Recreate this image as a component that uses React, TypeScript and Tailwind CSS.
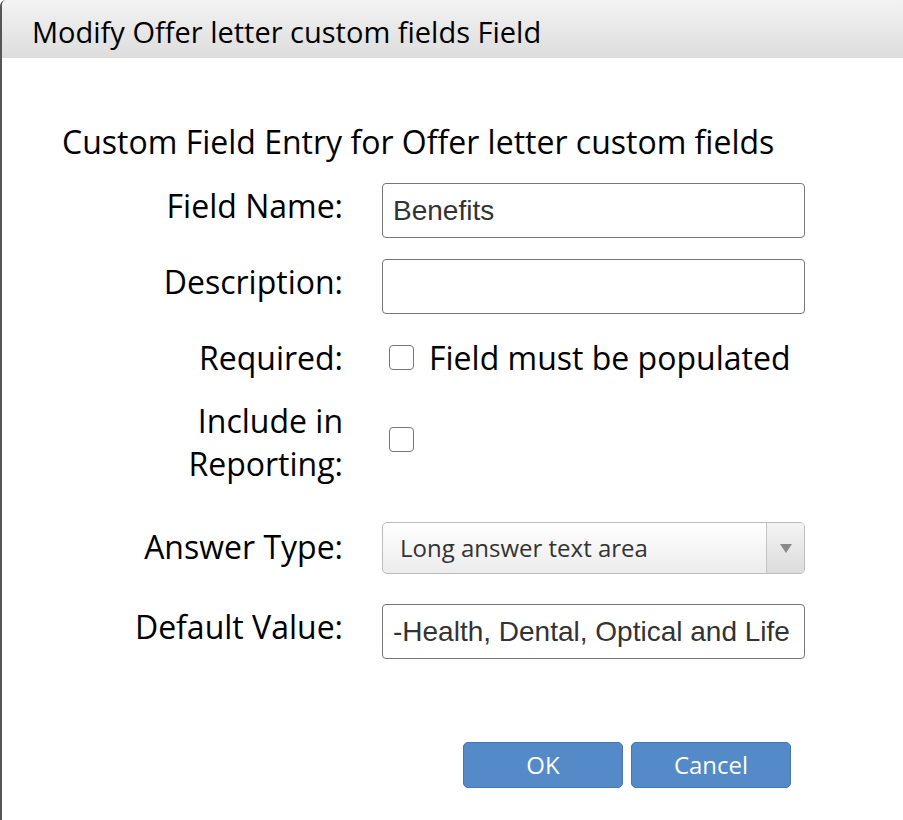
import React from "react";

const sans = "font-['Open_Sans',sans-serif]";
const arial = "font-['Liberation_Sans',Arial,sans-serif]";

function Label({ children, className = "" }: { children: React.ReactNode; className?: string }) {
  return (
    <div className={`w-[341px] shrink-0 text-right text-[32px] leading-[43px] text-black ${sans} ${className}`}>
      {children}
    </div>
  );
}

function TextInput({ value }: { value: string }) {
  return (
    <input
      readOnly
      value={value}
      className={`h-[55px] w-[423px] rounded-[4px] border-[1.5px] border-[#777] bg-white px-[10px] text-[28px] text-[#333] outline-none ${arial}`}
    />
  );
}

function Checkbox() {
  return (
    <span className="inline-block h-[25px] w-[25px] shrink-0 rounded-[4px] border-[1.5px] border-[#777] bg-white" />
  );
}

export default function App() {
  return (
    <div className="min-h-[820px] w-[903px] overflow-hidden bg-white">
      <div className="min-h-[820px] rounded-tl-[6px] border-l-2 border-[#555]">
        <div
          className={`flex h-[58px] items-center rounded-tl-[5px] bg-gradient-to-b from-[#f3f3f3] to-[#dddddd] pl-[30px] pt-[6px] text-[29px] text-black ${sans}`}
        >
          Modify Offer letter custom fields Field
        </div>

        <div className="flex flex-col pt-[66px]">
          <div className={`pl-[60px] text-[32px] leading-[36px] text-black ${sans}`}>
            Custom Field Entry for Offer letter custom fields
          </div>

          <div className="mt-[23px] flex items-center gap-[39px]">
            <Label className="pb-[10px]">Field Name:</Label>
            <TextInput value="Benefits" />
          </div>

          <div className="mt-[21px] flex items-center gap-[39px]">
            <Label className="pb-[10px]">Description:</Label>
            <TextInput value="" />
          </div>

          <div className="mt-[22px] flex items-center gap-[39px]">
            <Label>Required:</Label>
            <div className="flex items-center gap-[15px] pl-[7px]">
              <Checkbox />
              <span className={`text-[32px] leading-[43px] text-black ${sans}`}>
                Field must be populated
              </span>
            </div>
          </div>

          <div className="mt-[20px] flex items-center gap-[39px]">
            <Label>
              Include in
              <br />
              Reporting:
            </Label>
            <div className="pl-[7px]">
              <Checkbox />
            </div>
          </div>

          <div className="mt-[37px] flex items-center gap-[39px]">
            <Label className="pb-[4px]">Answer Type:</Label>
            <div className="flex h-[52px] w-[423px] items-stretch overflow-hidden rounded-[5px] border-[1.5px] border-[#bcbcbc] bg-gradient-to-b from-white to-[#ececec]">
              <div className={`flex flex-1 items-center pl-[17px] text-[24px] text-[#333] ${sans}`}>
                Long answer text area
              </div>
              <div className="flex w-[38px] items-center justify-center border-l-[1.5px] border-[#c4c4c4] bg-gradient-to-b from-[#f4f4f4] to-[#dcdcdc]">
                <svg width="12" height="9" viewBox="0 0 12 9">
                  <path d="M0 0 H12 L6 9 Z" fill="#8a8a8a" />
                </svg>
              </div>
            </div>
          </div>

          <div className="mt-[30px] flex items-center gap-[39px]">
            <Label className="pb-[10px]">Default Value:</Label>
            <TextInput value="-Health, Dental, Optical and Life" />
          </div>

          <div className="mt-[83px] flex gap-[8px] pl-[461px]">
            <button
              type="button"
              className={`h-[46px] w-[160px] rounded-[5px] border border-[#4677b3] bg-[#548ac7] text-[24px] text-white ${sans}`}
            >
              OK
            </button>
            <button
              type="button"
              className={`h-[46px] w-[160px] rounded-[5px] border border-[#4677b3] bg-[#548ac7] text-[24px] text-white ${sans}`}
            >
              Cancel
            </button>
          </div>
        </div>
      </div>
    </div>
  );
}
